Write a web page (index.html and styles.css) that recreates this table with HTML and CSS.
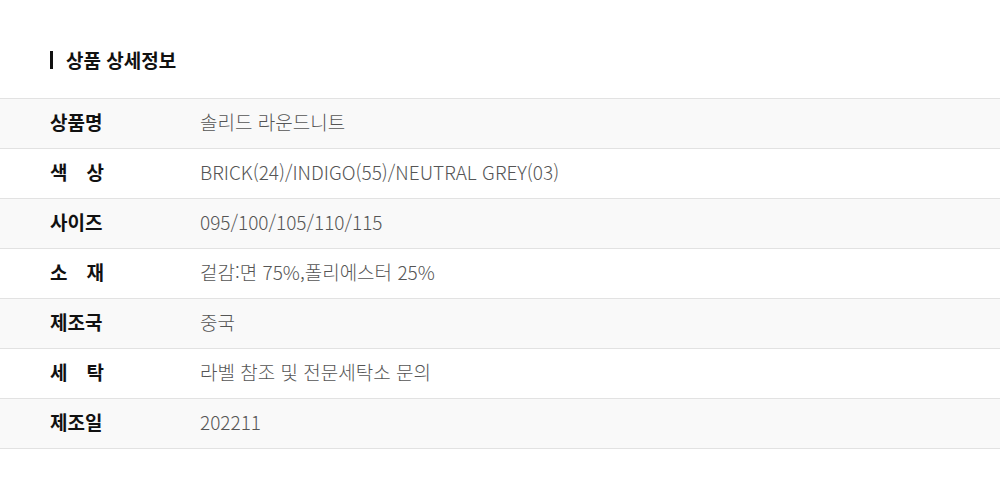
FILE: index.html
```html
<!DOCTYPE html>
<html lang="ko">
<head>
  <meta charset="utf-8">
  <title>상품 상세정보</title>
  <link rel="stylesheet" href="styles.css">
</head>
<body>
  <div class="detail">
    <h2 class="detail-title">상품 상세정보</h2>

    <table class="info-table">
      <tr>
        <th><span class="label">상품명</span></th>
        <td>솔리드 라운드니트</td>
      </tr>
      <tr>
        <th><span class="label">색 상</span></th>
        <td>BRICK(24)/INDIGO(55)/NEUTRAL GREY(03)</td>
      </tr>
      <tr>
        <th><span class="label">사이즈</span></th>
        <td>095/100/105/110/115</td>
      </tr>
      <tr>
        <th><span class="label">소 재</span></th>
        <td>겉감:면 75%,폴리에스터 25%</td>
      </tr>
      <tr>
        <th><span class="label">제조국</span></th>
        <td>중국</td>
      </tr>
      <tr>
        <th><span class="label">세 탁</span></th>
        <td>라벨 참조 및 전문세탁소 문의</td>
      </tr>
      <tr>
        <th><span class="label">제조일</span></th>
        <td>202211</td>
      </tr>
    </table>
  </div>
</body>
</html>
```

FILE: styles.css
```css
body {
  margin: 0;
  background-color: #fff;
  font-family: "Noto Sans CJK KR", "Noto Sans", sans-serif;
}

.detail {
  padding-top: 50px;
}

.detail-title {
  display: flex;
  align-items: center;
  gap: 13px;
  margin: 0 0 28px 50px;
  font-size: 19px;
  font-weight: bold;
  line-height: 20px;
  color: #111;
}

.detail-title::before {
  content: "";
  width: 3px;
  height: 18px;
  background-color: #111;
}

.info-table {
  width: 100%;
  border-collapse: collapse;
}

.info-table tr {
  height: 50px;
  border-top: 1px solid #e2e2e2;
  border-bottom: 1px solid #e2e2e2;
}

.info-table tr:nth-child(odd) {
  background-color: #f9f9f9;
}

.info-table th {
  width: 200px;
  padding: 0 0 5px 50px;
  box-sizing: border-box;
  text-align: left;
  font-size: 19px;
  font-weight: bold;
  color: #111;
}

.label {
  display: inline-block;
  width: 54px;
  text-align: justify;
  text-align-last: justify;
}

.info-table td {
  padding: 0 0 5px;
  font-size: 19px;
  font-weight: 300;
  color: #555;
}
```
